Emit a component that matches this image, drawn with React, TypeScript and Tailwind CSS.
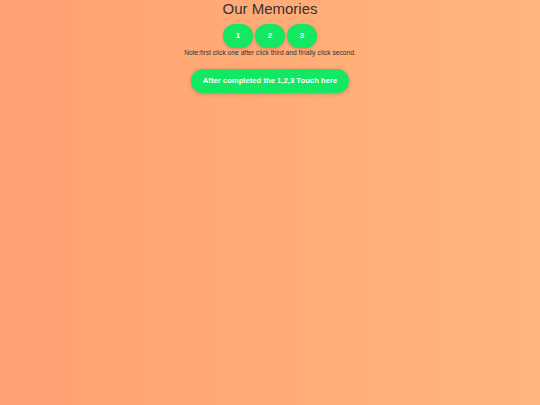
export default function App() {
  return (
    <div className="min-h-[405px] w-full bg-gradient-to-r from-[#ffa072] to-[#ffb67c] font-['Liberation_Sans',Arial,sans-serif] text-center">
      <h1 className="pt-[1px] text-[15px] leading-[16px] text-[#333]">Our Memories</h1>
      <div className="mt-[7px] flex justify-center gap-[2px]">
        {['1', '2', '3'].map((n) => (
          <button
            key={n}
            className="h-[24px] w-[30px] rounded-[12px] bg-[#12e862] text-[8px] font-bold text-white shadow-[0_1px_3px_rgba(0,0,0,0.2)]"
          >
            {n}
          </button>
        ))}
      </div>
      <p className="mt-0 text-[6.7px] leading-[9px] text-[#333]">
        Note:first click one after click third and finally click second.
      </p>
      <button className="mt-[12px] h-[24px] w-[158px] rounded-full bg-[#12e862] text-[7.7px] font-bold text-white shadow-[0_1px_4px_rgba(0,0,0,0.2)]">
        After completed the 1,2,3 Touch here
      </button>
    </div>
  )
}
